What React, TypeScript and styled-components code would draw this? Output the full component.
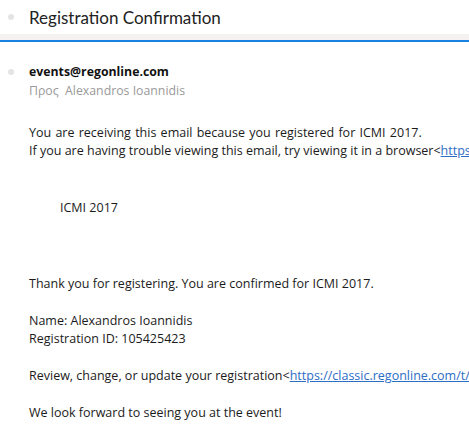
import React from 'react';
import styled, { createGlobalStyle } from 'styled-components';

const GlobalStyle = createGlobalStyle`
  html, body {
    margin: 0;
    padding: 0;
    background: #ffffff;
  }
  body {
    font-family: "Open Sans", "Noto Sans", sans-serif;
    color: #1b1b1b;
  }
`;

const Page = styled.div`
  width: 469px;
  height: 434px;
  overflow: hidden;
  background: #ffffff;
`;

const Header = styled.div`
  display: flex;
  align-items: center;
  height: 34px;
  padding-left: 8px;
`;

const Dot = styled.span<{ $top?: number }>`
  width: 6px;
  height: 6px;
  margin-top: ${(p) => p.$top ?? 0}px;
  border-radius: 50%;
  background: #e4e4e4;
  flex-shrink: 0;
`;

const Title = styled.h1`
  margin: 0 0 0 15px;
  font-family: "Lato", "Open Sans", sans-serif;
  font-size: 17px;
  font-weight: 400;
  color: #222;
  white-space: nowrap;
`;

const Band = styled.div`
  height: 6px;
  background: #f4f1f0;
  border-bottom: 2px solid #1a82e2;
`;

const Sender = styled.div`
  display: flex;
  align-items: flex-start;
  padding: 21px 0 0 8px;
`;

const SenderInfo = styled.div`
  margin-left: 15px;
  display: flex;
  flex-direction: column;
`;

const From = styled.div`
  font-size: 12.3px;
  font-weight: 700;
  color: #111;
  line-height: 18px;
`;

const To = styled.div`
  font-size: 12.3px;
  color: #9a9a9a;
  line-height: 18px;
  margin-top: 1px;
`;

const Body = styled.div`
  padding: 24px 0 0 29px;
  font-size: 12.5px;
  line-height: 18px;
  white-space: nowrap;
`;

const Line = styled.p<{ $gap?: number; $indent?: number; $spread?: number }>`
  margin: ${(p) => p.$gap ?? 0}px 0 0 ${(p) => p.$indent ?? 0}px;
  word-spacing: ${(p) => p.$spread ?? 0}px;
`;

const Link = styled.a`
  color: #2c6dc6;
  text-decoration: underline;
`;

export default function App() {
  return (
    <>
      <GlobalStyle />
      <Page>
        <Header>
          <Dot />
          <Title>Registration Confirmation</Title>
        </Header>
        <Band />
        <Sender>
          <Dot $top={6} />
          <SenderInfo>
            <From>events@regonline.com</From>
            <To>Προς&nbsp; Alexandros Ioannidis</To>
          </SenderInfo>
        </Sender>
        <Body>
          <Line $spread={1}>You are receiving this email because you registered for ICMI 2017.</Line>
          <Line>
            If you are having trouble viewing this email, try viewing it in a browser&lt;
            <Link href="#">https://classic.regonline.com/</Link>
          </Line>
          <Line $gap={39} $indent={31}>ICMI 2017</Line>
          <Line $gap={58}>Thank you for registering. You are confirmed for ICMI 2017.</Line>
          <Line $gap={19}>Name: Alexandros Ioannidis</Line>
          <Line>Registration ID: 105425423</Line>
          <Line $gap={19}>
            Review, change, or update your registration&lt;
            <Link href="#">https://classic.regonline.com/t/</Link>
          </Line>
          <Line $gap={19}>We look forward to seeing you at the event!</Line>
        </Body>
      </Page>
    </>
  );
}
